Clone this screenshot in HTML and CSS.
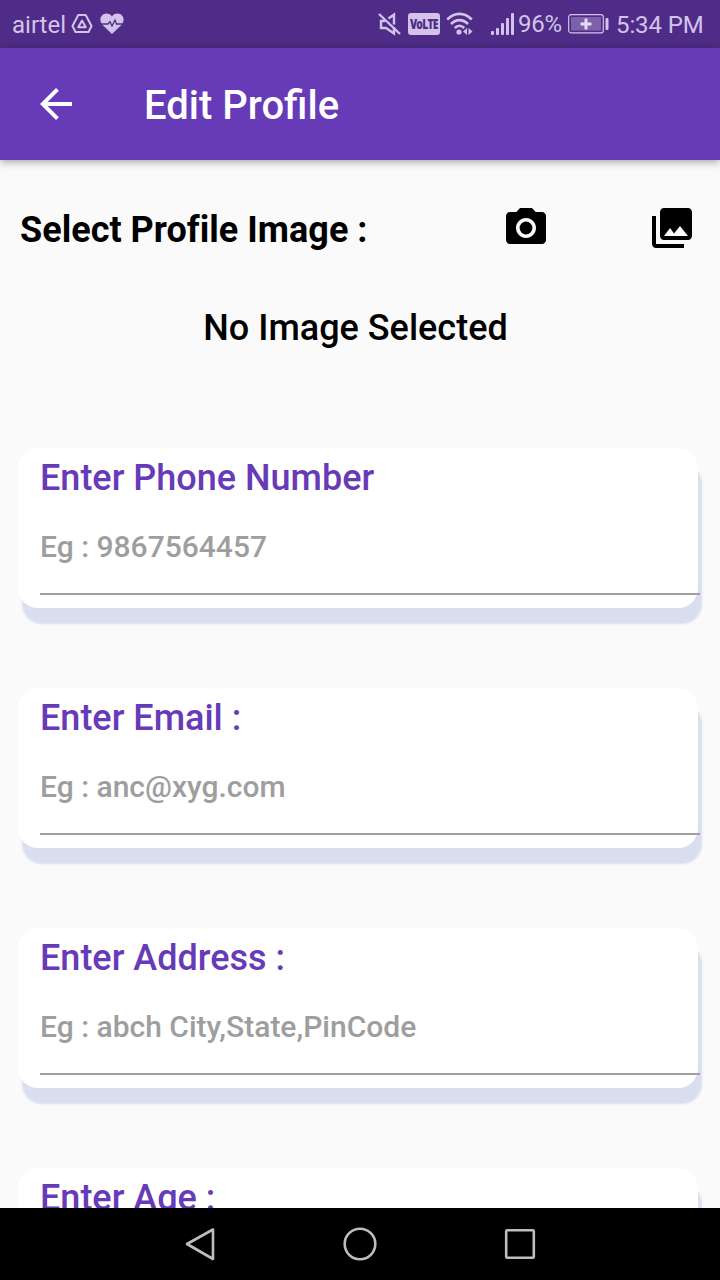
FILE: index.html
```html
<!DOCTYPE html>
<html lang="en">
<head>
<meta charset="utf-8">
<title>Edit Profile</title>
<link rel="stylesheet" href="styles.css">
</head>
<body>
<div class="screen">
  <div class="status">
    <span class="carrier">airtel</span>
    <svg class="drive" width="22" height="22" viewBox="0 0 22 22" fill="none" stroke="currentColor" stroke-width="2" stroke-linejoin="round"><path d="M7.300 2h7.400l5.800 11-3 6h-13l-3-6z"/><path d="M11 7.600l3.800 6.600H7.200z"/></svg>
    <svg class="heart" width="24" height="22" viewBox="0 0 24 22"><path fill="currentColor" d="M12 21L2.600 12C-2 7 1.300.6 6.600.6c2.400 0 4.200 1.200 5.400 2.800C13.200 1.800 15 .6 17.400.6c5.300 0 8.600 6.400 4 11.400z"/><path class="pulse" d="M1 11h7l2-2.400 2 4.400 3-6 1.500 4H23"/></svg>
    <span class="spacer"></span>
    <svg class="mute" width="24" height="24" viewBox="0 0 24 24" fill="none" stroke="currentColor" stroke-width="2.400"><path d="M7 9H3v7h5l8 5.500V15M10.500 6.500L16 2.500v10M1 2l21 20"/></svg>
    <span class="volte"><span class="volte-text">VoLTE</span></span>
    <svg class="wifi" width="28" height="24" viewBox="0 0 28 24" fill="none" stroke="currentColor" stroke-width="2.600"><path d="M1.200 7.500C8.500 0 18.500 0 25.800 7.500M5 12c5-5.200 12-5.200 17 0M8.800 16c3-3 6.400-3 9.400 0"/><circle cx="13" cy="20" r="2.600" fill="currentColor" stroke="none"/><path fill="currentColor" stroke="none" d="M21 16v7l-4-3.500zM22.500 16v7l4-3.500z"/></svg>
    <svg class="signal" width="24" height="22" viewBox="0 0 24 22" fill="currentColor"><rect x="0" y="18" width="3" height="4" rx="1"/><rect x="5" y="15" width="3" height="7" rx="1"/><rect x="10" y="10" width="3" height="12" rx="1"/><rect x="15" y="5" width="3" height="17" rx="1"/><rect x="20" y="0" width="3" height="22" rx="1"/></svg>
    <span class="percent">96%</span>
    <svg class="battery" width="41" height="20" viewBox="0 0 41 20"><rect x=".7" y=".7" width="34.600" height="18.200" rx="2.500" fill="none" stroke="currentColor" stroke-width="1.200"/><rect x="3" y="3" width="30" height="13.600" fill="currentColor" opacity=".35"/><path d="M18 4.500v11M12.500 10h11" stroke="#e6dcf4" stroke-width="3"/><rect x="37.500" y="4" width="3" height="12" rx="1" fill="currentColor"/></svg>
    <span class="time">5:34 PM</span>
  </div>
  <header class="appbar">
    <svg class="back" width="48" height="48" viewBox="0 0 24 24" fill="#fff"><path d="M20 11H7.830l5.590-5.590L12 4l-8 8 8 8 1.410-1.410L7.830 13H20v-2z"/></svg>
    <h1 class="title">Edit Profile</h1>
  </header>
  <main class="content">
    <div class="picker">
      <span class="picker-label">Select Profile Image :</span>
      <svg class="camera" width="48" height="48" viewBox="0 0 24 24"><circle cx="12" cy="12" r="3.200"/><path d="M9 2L7.170 4H4c-1.100 0-2 .9-2 2v12c0 1.100.9 2 2 2h16c1.100 0 2-.9 2-2V6c0-1.100-.9-2-2-2h-3.170L15 2H9zm3 15c-2.760 0-5-2.240-5-5s2.240-5 5-5 5 2.240 5 5-2.240 5-5 5z"/></svg>
      <svg class="gallery" width="48" height="48" viewBox="0 0 24 24"><path d="M22 16V4c0-1.100-.9-2-2-2H8c-1.100 0-2 .9-2 2v12c0 1.100.9 2 2 2h12c1.100 0 2-.9 2-2zm-11-4l2.030 2.710L16 11l4 5H8l3-4zM2 6v14c0 1.100.9 2 2 2h14v-2H4V6H2z"/></svg>
    </div>
    <p class="empty">No Image Selected</p>
    <div class="cards">
      <section class="card"><h2 class="label">Enter Phone Number</h2><div class="field">Eg : 9867564457</div></section>
      <section class="card"><h2 class="label">Enter Email :</h2><div class="field">Eg : anc@xyg.com</div></section>
      <section class="card"><h2 class="label">Enter Address :</h2><div class="field">Eg : abch City,State,PinCode</div></section>
      <section class="card"><h2 class="label">Enter Age :</h2></section>
    </div>
  </main>
  <nav class="navbar">
    <svg width="32" height="36" viewBox="0 0 32 36"><path d="M29 3.500v29.500L3 18z"/></svg>
    <svg width="36" height="36" viewBox="0 0 36 36"><circle cx="18" cy="18" r="15.300"/></svg>
    <svg width="32" height="36" viewBox="0 0 32 36"><rect x="2.200" y="4.200" width="27.600" height="27.600" rx="1"/></svg>
  </nav>
</div>
</body>
</html>
```
FILE: styles.css
```css
* { box-sizing: border-box; }
body { margin: 0; font-family: Roboto, sans-serif; }
h1, h2, p { margin: 0; font-weight: 500; }
svg { display: block; flex: none; }
.screen { width: 720px; height: 1280px; display: flex; flex-direction: column; overflow: hidden; background: #fafafa; }

.status { height: 48px; flex: none; display: flex; align-items: center; padding: 0 16px 0 12px; background: #4e2c87; color: #d3c3ea; font-size: 24px; line-height: 48px; white-space: nowrap; }
.carrier { width: 59px; padding-top: 2px; }
.heart { margin-left: 7px; }
.pulse { fill: none; stroke: #4e2c87; stroke-width: 1.3; }
.spacer { flex: 1; }
.mute { margin-right: 6px; }
.volte { display: flex; justify-content: center; width: 32px; height: 22px; margin-right: 6px; border-radius: 3px; background: #d3c3ea; color: #4e2c87; font: 800 11px/22px "Open Sans", sans-serif; letter-spacing: -0.8px; }
.volte-text { transform: scale(0.94, 1.35); }
.wifi { margin-right: 17px; }
.signal { margin-right: 3px; }
.percent { width: 50px; letter-spacing: -0.2px; }
.time { width: 87px; margin-left: 7px; margin-right: 1px; padding-top: 2px; letter-spacing: -0.1px; }

.appbar { height: 112px; flex: none; display: flex; align-items: center; padding-left: 32px; background: #673ab7; color: #fff; box-shadow: 0 2px 8px rgba(0, 0, 0, 0.35); z-index: 1; }
.title { margin-left: 64px; padding-top: 3px; font-size: 40px; line-height: 48px; }

.content { flex: 1; min-height: 0; overflow: hidden; }
.picker { display: flex; align-items: center; padding: 44px 24px 0 20px; }
.picker-label { flex: 1; padding-top: 3px; font-size: 36px; font-weight: 700; line-height: 42px; letter-spacing: 0.02px; }
.gallery { margin-left: 98px; }
.empty { margin: 55px 0 99px; padding-right: 9px; font-size: 36px; line-height: 42px; text-align: center; }
.cards { display: flex; flex-direction: column; gap: 80px; padding: 0 22px 0 18px; }
.card { height: 160px; flex: none; padding: 9px 0 0 22px; border-radius: 20px; background: #fff; box-shadow: 4px 16px 2px #d9dfef; }
.label { color: #673ab7; font-size: 36px; line-height: 42px; }
.field { width: 660px; height: 96px; padding-top: 30px; border-bottom: 2px solid #a0a0a0; color: #9e9e9e; font-size: 30px; font-weight: 500; line-height: 36px; }

.navbar { height: 72px; flex: none; display: flex; align-items: center; justify-content: center; gap: 126px; background: #000; }
.navbar svg { fill: none; stroke: #bdbdbd; stroke-width: 2.6; stroke-linejoin: round; }
```
